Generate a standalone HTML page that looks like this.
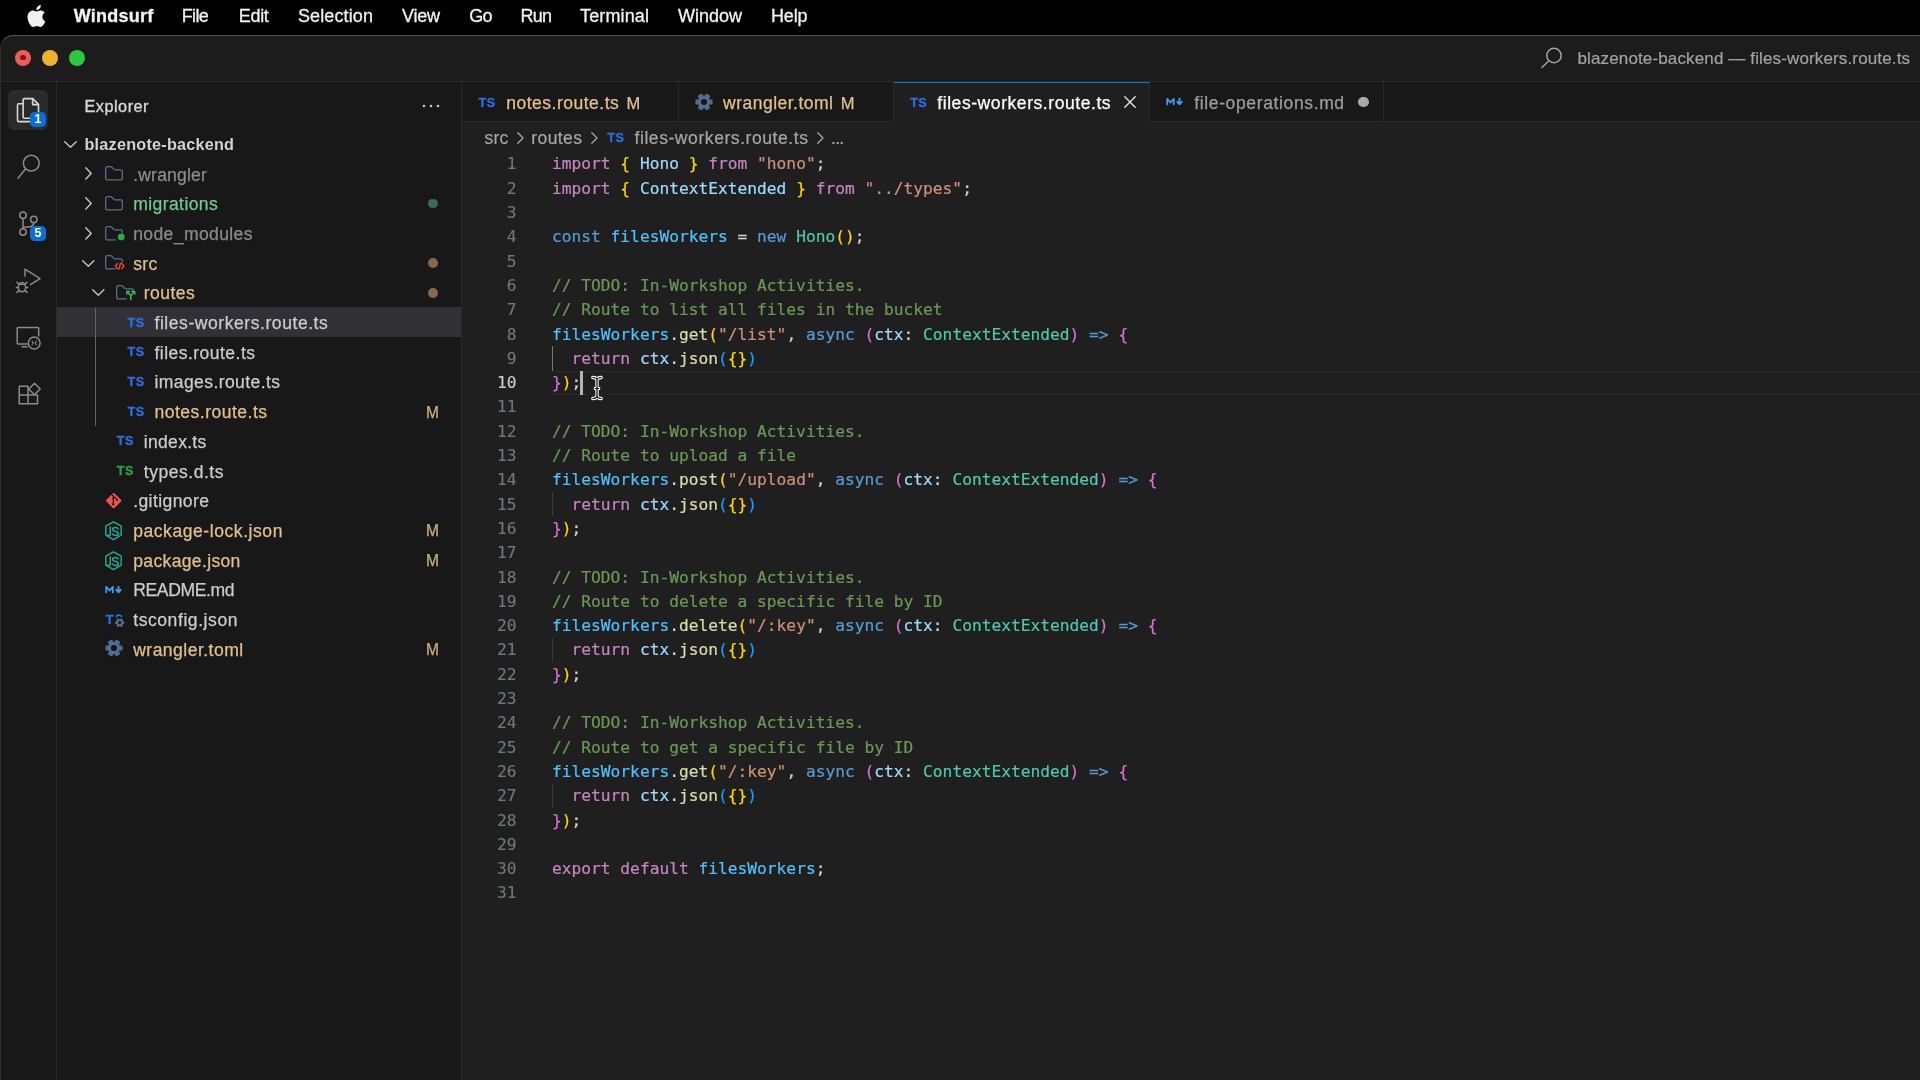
<!DOCTYPE html>
<html lang="en">
<head>
<meta charset="utf-8">
<title>files-workers.route.ts — blazenote-backend — Windsurf</title>
<style>
*{box-sizing:border-box;margin:0;padding:0}
html,body{width:1920px;height:1080px;overflow:hidden;background:#000}
body{position:relative;font-family:"Liberation Sans",sans-serif;color:#ccc}
svg{position:absolute;overflow:visible}
/* ---------- mac menu bar ---------- */
#menubar{position:absolute;left:0;top:0;width:1920px;height:35px;background:#000;will-change:transform}
#menubar span{position:absolute;top:0.1px;-webkit-text-stroke:0.3px;height:33px;line-height:33px;font-size:18px;white-space:nowrap;color:#f2f2f2}
#menubar .app{font-weight:bold}
/* ---------- window ---------- */
#win{position:absolute;left:0;top:35px;width:1940px;height:1060px;background:#181818;border-top-left-radius:13px;overflow:hidden;will-change:transform}
#winborder{position:absolute;left:0;top:0;width:1940px;height:1060px;border-top-left-radius:13px;border-top:1.4px solid #565656;border-left:1px solid #2e2e2e;pointer-events:none;z-index:50}
#titlebar{position:absolute;left:0;top:0;width:1920px;height:46.5px;background:#1c1c1c;border-bottom:1px solid #292929}
.tl{position:absolute;top:14.5px;width:16.4px;height:16.4px;border-radius:50%}
#title-text{position:absolute;left:1577.5px;top:0;height:46px;line-height:46px;font-size:17px;color:#a2a2a2;white-space:nowrap}
/* ---------- activity bar ---------- */
#activity{position:absolute;left:0;top:47px;width:57px;height:1000px;background:#181818;border-right:1px solid #292929}
#act-active{position:absolute;left:8.3px;top:8px;width:40px;height:40.3px;border-radius:6px;background:#2a2a2a}
.badge{position:absolute;width:16px;height:15px;border-radius:4.5px;background:#0a6fd8;color:#fff;font-weight:bold;font-size:12.5px;line-height:15px;text-align:center}
/* ---------- sidebar ---------- */
#sidebar{position:absolute;left:57px;top:47px;width:405px;height:1000px;background:#181818;border-right:1px solid #292929}
#sb-title{position:absolute;left:27.5px;top:10px;height:28px;line-height:28px;font-size:16.2px;color:#d4d4d4;white-space:nowrap}
#sb-root{position:absolute;left:27.5px;top:47.4px;height:29.7px;line-height:29.7px;font-size:16.2px;font-weight:bold;color:#d4d4d4;white-space:nowrap}
.row{position:absolute;left:0;width:404px;height:29.7px}
.row.sel{background:#303036}
.row .lbl{position:absolute;top:1.7px;-webkit-text-stroke:0.25px;height:29.7px;line-height:29.4px;font-size:17.55px;white-space:nowrap;color:#cccccc}
.row .dec{position:absolute;left:365px;width:21px;top:1px;height:29.7px;line-height:29.4px;font-size:15.6px;-webkit-text-stroke:0.25px;text-align:center;color:#cdae80}
.row .dot{position:absolute;left:370.8px;top:10.1px;width:9.8px;height:9.8px;border-radius:50%}
.c-mod{color:#e2c08d !important}
.c-add{color:#73c991 !important}
.c-ign{color:#8c8c8c !important}
.tsico{position:absolute;-webkit-text-stroke:0.3px;font-weight:bold;font-size:12.6px;line-height:14px;height:14px;letter-spacing:0.4px;color:#2f6fe4;white-space:nowrap}
/* ---------- editor ---------- */
#editor{position:absolute;left:462px;top:47px;width:1460px;height:1000px;background:#1f1f1f}
#tabs{position:absolute;left:0;top:0;width:1460px;height:40px;background:#181818;border-bottom:1px solid #292929}
.tab{position:absolute;top:0;height:39px;border-right:1px solid #292929}
.tab.active{background:#1f1f1f;height:40px;border-top:1.5px solid #0078d4}
.tab .tt{position:absolute;top:1px;-webkit-text-stroke:0.25px;height:39px;line-height:40.5px;font-size:17.55px;white-space:nowrap}
#crumbs{position:absolute;left:0;top:40px;width:1460px;height:30px}
#crumbs .bc{position:absolute;top:1px;-webkit-text-stroke:0.2px;height:30px;line-height:31px;font-size:17.55px;color:#a6a6a6;white-space:nowrap}
/* ---------- code ---------- */
#code{position:absolute;left:0;top:70.75px;width:1460px;height:930px;font-family:"DejaVu Sans Mono","Liberation Mono",monospace;font-size:16.23px}
.ln{position:absolute;margin-top:-0.3px;-webkit-text-stroke:0.15px;left:0;width:54.5px;text-align:right;height:24.3px;line-height:24.3px;color:#6e7681;white-space:pre}
.ln.cur{color:#cccccc}
.cl{position:absolute;margin-top:-0.3px;-webkit-text-stroke:0.2px;left:90px;height:24.3px;line-height:24.3px;white-space:pre;color:#d4d4d4}
.k{color:#c586c0}.b{color:#569cd6}.v{color:#9cdcfe}.c{color:#4fc1ff}.t{color:#4ec9b0}.s{color:#ce9178}
.f{color:#dcdcaa}.m{color:#6a9955}.p1{color:#ffd700}.p2{color:#da70d6}.p3{color:#179fff}
#curline{position:absolute;left:89.3px;width:1380px;top:218.6px;height:23.3px;border-top:1.5px solid #282828;border-bottom:1.5px solid #282828}
.guide{position:absolute;left:89.5px;width:1.3px;background:#393939;height:24.3px}
#caret{position:absolute;left:118.1px;top:218px;width:2.6px;height:24.5px;background:#b4b4b4}
</style>
</head>
<body>
<div id="menubar">
<svg style="left:27.300px;top:5.200px" width="19" height="22" viewBox="0 0 170 200"><path fill="#f2f2f2" d="M150.4 68.2c-1.2.9-21.7 12.5-21.7 38.200 0 29.700 26.100 40.200 26.900 40.500-.1.600-4.100 14.400-13.700 28.300-8.500 12.300-17.400 24.500-31 24.500s-17-7.900-32.700-7.900c-15.300 0-20.700 8.100-33.100 8.100s-21.100-11.300-31-25.300C2.500 158.300-6.700 132.900-6.700 108.700c0-38.700 25.200-59.300 50-59.300 13.200 0 24.200 8.700 32.400 8.700 7.900 0 20.200-9.200 35.200-9.200 5.700 0 26.100.5 39.500 19.300zM103.700 32c6.200-7.400 10.600-17.600 10.600-27.800 0-1.400-.1-2.900-.4-4-10.100.4-22.100 6.700-29.300 15.100-5.700 6.500-11 16.700-11 27.100 0 1.600.3 3.100.4 3.600.6.100 1.700.300 2.700.300 9.100 0 20.500-6.100 27-14.300z" transform="translate(10,0)"/></svg>
  <span id="t1" class="app" style="left:73.8px;letter-spacing:0.239px">Windsurf</span>
  <span id="t2" style="left:181.8px;letter-spacing:-0.672px">File</span>
  <span id="t3" style="left:238.8px;letter-spacing:-0.344px">Edit</span>
  <span id="t4" style="left:298px;letter-spacing:0.117px">Selection</span>
  <span id="t5" style="left:402px;letter-spacing:-0.234px">View</span>
  <span id="t6" style="left:469.2px;letter-spacing:-0.700px">Go</span>
  <span id="t7" style="left:520.5px;letter-spacing:-0.700px">Run</span>
  <span id="t8" style="left:580px;letter-spacing:0.138px">Terminal</span>
  <span id="t9" style="left:678px;letter-spacing:-0.006px">Window</span>
  <span id="t10" style="left:771px;letter-spacing:-0.177px">Help</span>
</div>
<div id="win">
<div id="titlebar">
<div class="tl" style="left:14.8px;background:#f05b57"></div><div style="position:absolute;left:20.2px;top:19.9px;width:5.6px;height:5.6px;border-radius:50%;background:#7c1a17"></div>
<div class="tl" style="left:41.8px;background:#ecb22f"></div>
<div class="tl" style="left:69px;background:#2dc840"></div>
<svg style="left:1540.200px;top:10.600px" width="24" height="24" viewBox="0 0 24 24" fill="none" stroke="#a2a2a2" stroke-width="1.5" stroke-linecap="round"><circle cx="14" cy="9.5" r="7.2"/><path d="M8.800 14.700L2 21.500"/></svg>
<div id="t11" style="position:absolute;left:1577.5px;top:1px;height:46px;line-height:46px;font-size:17px;color:#a2a2a2;-webkit-text-stroke:0.2px;white-space:nowrap;;letter-spacing:0.136px">blazenote-backend — files-workers.route.ts</div>
</div>
<div id="activity">
<div id="act-active"></div>
<svg style="left:0;top:0" width="57" height="340" viewBox="0 82 57 340" fill="none" stroke-linejoin="round" stroke-linecap="round">
<g stroke="#d7d7d7" stroke-width="1.6"><path d="M24.500 98.600h8.200l5.800 5.800v12.400a1.400 1.400 0 0 1-1.400 1.400H24.500a1.400 1.400 0 0 1-1.400-1.400V100a1.400 1.400 0 0 1 1.400-1.400z"/><path d="M32.600 98.800v5.800h5.800"/><path d="M22.800 103.800h-3.900a1.400 1.400 0 0 0-1.400 1.400v15a1.400 1.400 0 0 0 1.400 1.400h11.400a1.400 1.400 0 0 0 1.400-1.400v-1.800"/></g>
<g stroke="#8b8b8b" stroke-width="1.5"><circle cx="31.300" cy="163.200" r="7.900"/><path d="M25.500 169L18 178.200"/></g>
<g stroke="#8b8b8b" stroke-width="1.5"><circle cx="23" cy="215.300" r="3.200"/><circle cx="33.800" cy="219.500" r="3.200"/><circle cx="23" cy="232" r="3.200"/><path d="M23 218.600v10.100M33.800 222.800c0 3.400-3 4.200-6 4.200h-4.800"/></g>
<g stroke="#8b8b8b" stroke-width="1.5"><path d="M25 276V269.200L40 278.700L30.500 284.600"/><ellipse cx="22" cy="287.200" rx="3.600" ry="4.600"/><path d="M19.200 284.300h5.600M16.300 287.400h2M25.700 287.400h2M17 282.200l1.800 1.700M27 282.200l-1.800 1.700M17 292.400l1.900-1.800M27 292.400l-1.900-1.800"/></g>
<g stroke="#8b8b8b" stroke-width="1.500"><path d="M27 343.900H18a.8.800 0 0 1-.8-.8V328.300a.8.800 0 0 1 .8-.8H37.900a.8.800 0 0 1 .8.800V336"/><path d="M22 346.700h5"/><circle cx="34.200" cy="343" r="5.900"/></g><g stroke="#8b8b8b" stroke-width="1.100"><path d="M32 341.200l1.300 1.800-1.300 1.800M36.400 341.200l-1.300 1.800 1.300 1.800"/></g>
<g stroke="#8b8b8b" stroke-width="1.500"><path d="M19.200 386.300h8.800v8.700h-8.800zM19.200 395h8.800v8.700h-8.800zM28 395h9.500v8.700H28z"/><path d="M34.500 383.200l5.700 5.800-5.700 5.800-5.700-5.800z"/></g>
</svg>
<div class="badge" style="left:30px;top:30.4px">1</div>
<div class="badge" style="left:30px;top:143.600px">5</div>
</div>
<div id="sidebar">
<div id="t12" style="position:absolute;left:27.5px;top:9.500px;height:28px;line-height:28px;font-size:16.2px;color:#d8d8d8;-webkit-text-stroke:0.35px;white-space:nowrap;;letter-spacing:0.531px">Explorer</div>
<svg style="left:364px;top:20.500px" width="20" height="6" viewBox="0 0 20 6"><circle cx="3" cy="3" r="1.350" fill="#c5c5c5"/><circle cx="10" cy="3" r="1.350" fill="#c5c5c5"/><circle cx="17" cy="3" r="1.350" fill="#c5c5c5"/></svg>
<svg style="left:6.700px;top:59.300px" width="13" height="7" viewBox="0 0 13 7" fill="none" stroke="#c5c5c5" stroke-width="1.400" stroke-linecap="round" stroke-linejoin="round"><path d="M.7.700l5.800 5.600L12.300.7"/></svg>
<div id="t13" style="position:absolute;left:27.500px;top:48.400px;height:29.7px;line-height:29.7px;font-size:16.2px;font-weight:bold;color:#d2d2d2;white-space:nowrap;;letter-spacing:0.235px">blazenote-backend</div>
<div class="row" style="top:76.9px"><svg style="left:27.9px;top:8.3px" width="7" height="13" viewBox="0 0 7 13" fill="none" stroke="#c5c5c5" stroke-width="1.400" stroke-linecap="round" stroke-linejoin="round"><path d="M.8.800l5.400 5.600L.8 12"/></svg><svg style="left:47.7px;top:7.4px" width="18" height="14.600" viewBox="0 0 18 14.600" fill="none" stroke="#54718f" stroke-width="1.300" stroke-linecap="round" stroke-linejoin="round"><path d="M2.200 .7H5.600c.5 0 .9.200 1.200.5l2 2.200c.3.300.7.500 1.200.5h5.800c.8 0 1.500.7 1.500 1.500v7c0 .8-.7 1.500-1.500 1.500H2.200c-.8 0-1.500-.7-1.500-1.500V2.200c0-.8.7-1.500 1.500-1.500z"/></svg><span id="t14" class="lbl c-ign" style="left:76.2px;letter-spacing:0.199px">.wrangler</span></div>
<div class="row" style="top:106.6px"><svg style="left:27.9px;top:8.3px" width="7" height="13" viewBox="0 0 7 13" fill="none" stroke="#c5c5c5" stroke-width="1.400" stroke-linecap="round" stroke-linejoin="round"><path d="M.8.800l5.400 5.600L.8 12"/></svg><svg style="left:47.7px;top:7.4px" width="18" height="14.600" viewBox="0 0 18 14.600" fill="none" stroke="#54718f" stroke-width="1.300" stroke-linecap="round" stroke-linejoin="round"><path d="M2.200 .7H5.600c.5 0 .9.200 1.200.5l2 2.200c.3.300.7.500 1.200.5h5.800c.8 0 1.500.7 1.500 1.500v7c0 .8-.7 1.500-1.500 1.500H2.200c-.8 0-1.500-.7-1.500-1.500V2.200c0-.8.7-1.500 1.500-1.500z"/></svg><span id="t15" class="lbl c-add" style="left:76.2px;letter-spacing:0.414px">migrations</span><span class="dot" style="background:#3c6a54"></span></div>
<div class="row" style="top:136.3px"><svg style="left:27.9px;top:8.3px" width="7" height="13" viewBox="0 0 7 13" fill="none" stroke="#c5c5c5" stroke-width="1.400" stroke-linecap="round" stroke-linejoin="round"><path d="M.8.800l5.400 5.600L.8 12"/></svg><svg style="left:47.7px;top:7.4px" width="18" height="14.600" viewBox="0 0 18 14.600" fill="none" stroke="#54718f" stroke-width="1.300" stroke-linecap="round" stroke-linejoin="round"><path d="M10.300 13.900H2.200c-.8 0-1.500-.7-1.500-1.500V2.200c0-.8.7-1.500 1.500-1.500H5.600c.5 0 .9.200 1.200.5l2 2.200c.3.300.7.500 1.200.5h5.800c.8 0 1.500.7 1.500 1.500v1.300"/><circle cx="16.250" cy="10.900" r="3.400" fill="#2aac47" stroke="none"/></svg><span id="t16" class="lbl c-ign" style="left:76.2px;letter-spacing:0.389px">node_modules</span></div>
<div class="row" style="top:166.0px"><svg style="left:25.0px;top:11.6px" width="13" height="7" viewBox="0 0 13 7" fill="none" stroke="#c5c5c5" stroke-width="1.400" stroke-linecap="round" stroke-linejoin="round"><path d="M.7.700l5.600 5.600L11.900.7"/></svg><svg style="left:47.7px;top:7.4px" width="18" height="14.600" viewBox="0 0 18 14.600" fill="none" stroke="#54718f" stroke-width="1.300" stroke-linecap="round" stroke-linejoin="round"><path d="M10.300 13.900H2.200c-.8 0-1.500-.7-1.500-1.500V2.200c0-.8.7-1.500 1.500-1.500H5.600c.5 0 .9.200 1.200.5l2 2.200c.3.300.7.500 1.200.5h5.800c.8 0 1.500.7 1.500 1.500v1.300"/><g stroke="#e5432f" stroke-width="1.500"><path d="M12.600 8.600l-2.200 2.500 2.200 2.500M16.800 8.600l2.200 2.500-2.200 2.500M15.500 8.200l-1.600 5.800"/></g></svg><span id="t17" class="lbl c-mod" style="left:76.2px;letter-spacing:0.412px">src</span><span class="dot" style="background:#84694f"></span></div>
<div class="row" style="top:195.7px"><svg style="left:35.3px;top:11.6px" width="13" height="7" viewBox="0 0 13 7" fill="none" stroke="#c5c5c5" stroke-width="1.400" stroke-linecap="round" stroke-linejoin="round"><path d="M.7.700l5.600 5.600L11.900.7"/></svg><svg style="left:58.5px;top:7.4px" width="18" height="14.600" viewBox="0 0 18 14.600" fill="none" stroke="#54718f" stroke-width="1.300" stroke-linecap="round" stroke-linejoin="round"><path d="M10.300 13.900H2.200c-.8 0-1.500-.7-1.500-1.500V2.200c0-.8.7-1.500 1.500-1.500H5.600c.5 0 .9.200 1.200.5l2 2.200c.3.300.7.500 1.200.5h5.800c.8 0 1.500.7 1.500 1.500v1.300"/><g stroke="#2fc24a" stroke-width="1.500"><path d="M14.800 14.800v-4.300M14.800 10.500l-3.400-3.500M14.800 10.500l3.400-3.500"/><path d="M10.800 9.300V6.500h2.800M16 6.500h2.800v2.800" stroke-width="1.300"/></g></svg><span id="t18" class="lbl c-mod" style="left:86.8px;letter-spacing:0.433px">routes</span><span class="dot" style="background:#84694f"></span></div>
<div class="row sel" style="top:225.4px"><span class="tsico" style="left:70.6px;top:8.2px;color:#2f6fe4">TS</span><span id="t19" class="lbl" style="left:97.5px;letter-spacing:0.551px">files-workers.route.ts</span></div>
<div class="row" style="top:255.1px"><span class="tsico" style="left:70.6px;top:8.2px;color:#2f6fe4">TS</span><span id="t20" class="lbl" style="left:97.5px;letter-spacing:0.460px">files.route.ts</span></div>
<div class="row" style="top:284.8px"><span class="tsico" style="left:70.6px;top:8.2px;color:#2f6fe4">TS</span><span id="t21" class="lbl" style="left:97.5px;letter-spacing:0.403px">images.route.ts</span></div>
<div class="row" style="top:314.5px"><span class="tsico" style="left:70.6px;top:8.2px;color:#2f6fe4">TS</span><span id="t22" class="lbl c-mod" style="left:97.5px;letter-spacing:0.490px">notes.route.ts</span><span class="dec">M</span></div>
<div class="row" style="top:344.2px"><span class="tsico" style="left:59.8px;top:8.2px;color:#2f6fe4">TS</span><span id="t23" class="lbl" style="left:86.8px;letter-spacing:0.297px">index.ts</span></div>
<div class="row" style="top:373.9px"><span class="tsico" style="left:59.8px;top:8.2px;color:#2ea043">TS</span><span id="t24" class="lbl" style="left:86.8px;letter-spacing:0.519px">types.d.ts</span></div>
<div class="row" style="top:403.6px"><svg style="left:48.1px;top:6.5px" width="17.400" height="17.400" viewBox="0 0 17.400 17.400"><rect x="2.900" y="2.900" width="11.600" height="11.600" rx="1.300" transform="rotate(45 8.700 8.700)" fill="#ea5350"/><g stroke="#1a1212" stroke-width="1.150" fill="none" stroke-linecap="round"><path d="M8.300 3.800v8.600M6.600 2.300l5.400 5.400"/></g><circle cx="8.300" cy="12.300" r="1.150" fill="#1a1212"/><circle cx="8.300" cy="5.900" r="1" fill="#1a1212"/><circle cx="11.900" cy="7.700" r="1" fill="#1a1212"/></svg><span id="t25" class="lbl" style="left:76.2px;letter-spacing:0.408px">.gitignore</span></div>
<div class="row" style="top:433.3px"><svg style="left:48.3px;top:5.8px" width="17" height="19.400" viewBox="0 0 17 19.400" fill="none" stroke="#2aa996" stroke-linejoin="round" stroke-linecap="round"><path d="M8.500 .8l7.700 4.400v9l-7.700 4.400-7.700-4.400v-9z" stroke-width="1.400"/><path d="M5.300 6.100v6.600c0 1.600-1.300 2.300-2.900 1.500" stroke-width="1.500"/><path d="M13.200 7.900c-.6-1-1.600-1.500-2.800-1.500-1.600 0-2.800.8-2.800 2.100 0 2.600 5.800 1.200 5.800 3.900 0 1.300-1.200 2.100-2.900 2.100-1.400 0-2.500-.6-3.100-1.700" stroke-width="1.500"/></svg><span id="t26" class="lbl c-mod" style="left:76.2px;letter-spacing:0.554px">package-lock.json</span><span class="dec">M</span></div>
<div class="row" style="top:463.0px"><svg style="left:48.3px;top:5.8px" width="17" height="19.400" viewBox="0 0 17 19.400" fill="none" stroke="#2aa996" stroke-linejoin="round" stroke-linecap="round"><path d="M8.500 .8l7.700 4.400v9l-7.700 4.400-7.700-4.400v-9z" stroke-width="1.400"/><path d="M5.300 6.100v6.600c0 1.600-1.300 2.300-2.900 1.500" stroke-width="1.500"/><path d="M13.200 7.900c-.6-1-1.600-1.500-2.800-1.500-1.600 0-2.800.8-2.800 2.100 0 2.600 5.800 1.200 5.800 3.900 0 1.300-1.200 2.100-2.900 2.100-1.400 0-2.500-.6-3.100-1.700" stroke-width="1.500"/></svg><span id="t27" class="lbl c-mod" style="left:76.2px;letter-spacing:0.352px">package.json</span><span class="dec">M</span></div>
<div class="row" style="top:492.7px"><svg style="left:48.0px;top:9.6px" width="18" height="10" viewBox="0 0 18 10" fill="none" stroke="#4497f2" stroke-width="1.900" stroke-linecap="round" stroke-linejoin="round"><path d="M1.200 8.200V2.900l3.300 3.500 3.300-3.500v5.300"/><path d="M13.500 2.600v5.200M11.300 5.800l2.200 2.500 2.200-2.500"/></svg><span id="t28" class="lbl" style="left:76.2px;letter-spacing:-0.367px">README.md</span></div>
<div class="row" style="top:522.4px"><span class="tsico" style="left:48.8px;top:9.1px;font-size:12.800px">T</span><svg style="left:57.5px;top:9.3px" width="8" height="6" viewBox="0 0 8 6" fill="none" stroke="#2f6fe4" stroke-width="1.700" stroke-linecap="round"><path d="M6.400 2.300C5.500.6 1.500.7 1.500 2.700"/></svg><svg style="left:58.0px;top:13.9px" width="9.4" height="9.4" viewBox="-10 -10 20 20"><g fill="#4f6e90"><rect x="-2.900" y="-9.500" width="5.800" height="5.500" rx="1.400" transform="rotate(30)"/><rect x="-2.900" y="-9.500" width="5.800" height="5.500" rx="1.400" transform="rotate(90)"/><rect x="-2.900" y="-9.500" width="5.800" height="5.500" rx="1.400" transform="rotate(150)"/><rect x="-2.900" y="-9.500" width="5.800" height="5.500" rx="1.400" transform="rotate(210)"/><rect x="-2.900" y="-9.500" width="5.800" height="5.500" rx="1.400" transform="rotate(270)"/><rect x="-2.900" y="-9.500" width="5.800" height="5.500" rx="1.400" transform="rotate(330)"/></g><circle r="5.150" fill="none" stroke="#4f6e90" stroke-width="3.500"/></svg><span id="t29" class="lbl" style="left:76.2px;letter-spacing:0.571px">tsconfig.json</span></div>
<div class="row" style="top:552.1px"><svg style="left:47.8px;top:5.3px" width="18" height="18" viewBox="-10 -10 20 20"><g fill="#4f6e90"><rect x="-2.900" y="-9.500" width="5.800" height="5.500" rx="1.400" transform="rotate(30)"/><rect x="-2.900" y="-9.500" width="5.800" height="5.500" rx="1.400" transform="rotate(90)"/><rect x="-2.900" y="-9.500" width="5.800" height="5.500" rx="1.400" transform="rotate(150)"/><rect x="-2.900" y="-9.500" width="5.800" height="5.500" rx="1.400" transform="rotate(210)"/><rect x="-2.900" y="-9.500" width="5.800" height="5.500" rx="1.400" transform="rotate(270)"/><rect x="-2.900" y="-9.500" width="5.800" height="5.500" rx="1.400" transform="rotate(330)"/></g><circle r="5.150" fill="none" stroke="#4f6e90" stroke-width="3.500"/></svg><span id="t30" class="lbl c-mod" style="left:76.2px;letter-spacing:0.478px">wrangler.toml</span><span class="dec">M</span></div>
<div style="position:absolute;left:37.8px;top:225.5px;width:1.400px;height:118.400px;background:#646464"></div>
</div>
<div id="editor">
<div id="tabs">
<div class="tab" style="left:0.0px;width:216.5px"><span class="tsico" style="left:16.6px;top:14.3px;color:#2f6fe4">TS</span><span id="t31" class="tt" style="left:44.3px;color:#e2c08d;letter-spacing:0.482px">notes.route.ts</span><span class="tt" style="left:164.5px;color:#e2c08d;font-size:16.500px">M</span></div>
<div class="tab" style="left:216.5px;width:215.0px"><svg style="left:16.0px;top:11.0px" width="18" height="18" viewBox="-10 -10 20 20"><g fill="#4f6e90"><rect x="-2.900" y="-9.500" width="5.800" height="5.500" rx="1.400" transform="rotate(30)"/><rect x="-2.900" y="-9.500" width="5.800" height="5.500" rx="1.400" transform="rotate(90)"/><rect x="-2.900" y="-9.500" width="5.800" height="5.500" rx="1.400" transform="rotate(150)"/><rect x="-2.900" y="-9.500" width="5.800" height="5.500" rx="1.400" transform="rotate(210)"/><rect x="-2.900" y="-9.500" width="5.800" height="5.500" rx="1.400" transform="rotate(270)"/><rect x="-2.900" y="-9.500" width="5.800" height="5.500" rx="1.400" transform="rotate(330)"/></g><circle r="5.150" fill="none" stroke="#4f6e90" stroke-width="3.500"/></svg><span id="t32" class="tt" style="left:44.5px;color:#e2c08d;letter-spacing:0.478px">wrangler.toml</span><span class="tt" style="left:162.3px;color:#e2c08d;font-size:16.500px">M</span></div>
<div class="tab active" style="left:431.5px;width:256.0px"><span class="tsico" style="left:16.7px;top:12.8px;color:#2f6fe4">TS</span><span id="t33" class="tt" style="left:43.8px;color:#ffffff;top:-0.500px;letter-spacing:0.551px">files-workers.route.ts</span><svg style="left:230.8px;top:12.800px" width="12" height="12" viewBox="0 0 12 12" stroke="#e6e6e6" stroke-width="1.350" stroke-linecap="round"><path d="M.8.800l10.400 10.400M11.200.8L.8 11.200"/></svg></div>
<div class="tab" style="left:687.5px;width:234.0px"><svg style="left:16.5px;top:14.3px" width="18" height="10" viewBox="0 0 18 10" fill="none" stroke="#4497f2" stroke-width="1.900" stroke-linecap="round" stroke-linejoin="round"><path d="M1.200 8.200V2.900l3.300 3.500 3.300-3.500v5.300"/><path d="M13.500 2.600v5.200M11.300 5.800l2.200 2.500 2.200-2.500"/></svg><span id="t34" class="tt" style="left:44.8px;color:#9d9d9d;letter-spacing:0.615px">file-operations.md</span><span style="position:absolute;left:208.8px;top:14.800px;width:10.600px;height:10.600px;border-radius:50%;background:#a9a9a9"></span></div>
</div>
<div id="crumbs">
<span id="t35" class="bc" style="left:22.5px;letter-spacing:0.213px">src</span><svg style="left:55.1px;top:9.600px" width="7" height="12" viewBox="0 0 7 12" fill="none" stroke="#a6a6a6" stroke-width="1.300" stroke-linecap="round" stroke-linejoin="round"><path d="M.8.800l5.200 5.200L.8 11.200"/></svg><span id="t36" class="bc" style="left:69.3px;letter-spacing:0.393px">routes</span><svg style="left:128.6px;top:9.600px" width="7" height="12" viewBox="0 0 7 12" fill="none" stroke="#a6a6a6" stroke-width="1.300" stroke-linecap="round" stroke-linejoin="round"><path d="M.8.800l5.200 5.200L.8 11.200"/></svg><span class="tsico" style="left:145.3px;top:9.2px;color:#2f6de0">TS</span><span id="t37" class="bc" style="left:172.5px;letter-spacing:0.560px">files-workers.route.ts</span><svg style="left:354.6px;top:9.600px" width="7" height="12" viewBox="0 0 7 12" fill="none" stroke="#a6a6a6" stroke-width="1.300" stroke-linecap="round" stroke-linejoin="round"><path d="M.8.800l5.200 5.200L.8 11.200"/></svg><span id="t38" class="bc" style="left:369.0px;letter-spacing:-0.700px">...</span>
</div>
<div id="code">
<div id="curline"></div>
<div class="ln" style="top:0.0px">1</div><div class="cl" style="top:0.0px"><span class="k">import</span> <span class="p1">{</span> <span class="v">Hono</span> <span class="p1">}</span> <span class="k">from</span> <span class="s">&quot;hono&quot;</span>;</div>
<div class="ln" style="top:24.3px">2</div><div class="cl" style="top:24.3px"><span class="k">import</span> <span class="p1">{</span> <span class="v">ContextExtended</span> <span class="p1">}</span> <span class="k">from</span> <span class="s">&quot;../types&quot;</span>;</div>
<div class="ln" style="top:48.6px">3</div>
<div class="ln" style="top:72.9px">4</div><div class="cl" style="top:72.9px"><span class="b">const</span> <span class="c">filesWorkers</span> = <span class="b">new</span> <span class="t">Hono</span><span class="p1">()</span>;</div>
<div class="ln" style="top:97.2px">5</div>
<div class="ln" style="top:121.5px">6</div><div class="cl" style="top:121.5px"><span class="m">// TODO: In-Workshop Activities.</span></div>
<div class="ln" style="top:145.8px">7</div><div class="cl" style="top:145.8px"><span class="m">// Route to list all files in the bucket</span></div>
<div class="ln" style="top:170.1px">8</div><div class="cl" style="top:170.1px"><span class="c">filesWorkers</span>.<span class="f">get</span><span class="p1">(</span><span class="s">&quot;/list&quot;</span>, <span class="b">async</span> <span class="p2">(</span><span class="v">ctx</span>: <span class="t">ContextExtended</span><span class="p2">)</span> <span class="b">=&gt;</span> <span class="p2">{</span></div>
<div class="ln" style="top:194.4px">9</div><div class="cl" style="top:194.4px">  <span class="k">return</span> <span class="v">ctx</span>.<span class="f">json</span><span class="p3">(</span><span class="p1">{}</span><span class="p3">)</span></div>
<div class="ln cur" style="top:218.7px">10</div><div class="cl" style="top:218.7px"><span class="p2">}</span><span class="p1">)</span>;</div>
<div class="ln" style="top:243.0px">11</div>
<div class="ln" style="top:267.3px">12</div><div class="cl" style="top:267.3px"><span class="m">// TODO: In-Workshop Activities.</span></div>
<div class="ln" style="top:291.6px">13</div><div class="cl" style="top:291.6px"><span class="m">// Route to upload a file</span></div>
<div class="ln" style="top:315.9px">14</div><div class="cl" style="top:315.9px"><span class="c">filesWorkers</span>.<span class="f">post</span><span class="p1">(</span><span class="s">&quot;/upload&quot;</span>, <span class="b">async</span> <span class="p2">(</span><span class="v">ctx</span>: <span class="t">ContextExtended</span><span class="p2">)</span> <span class="b">=&gt;</span> <span class="p2">{</span></div>
<div class="ln" style="top:340.2px">15</div><div class="cl" style="top:340.2px">  <span class="k">return</span> <span class="v">ctx</span>.<span class="f">json</span><span class="p3">(</span><span class="p1">{}</span><span class="p3">)</span></div>
<div class="ln" style="top:364.5px">16</div><div class="cl" style="top:364.5px"><span class="p2">}</span><span class="p1">)</span>;</div>
<div class="ln" style="top:388.8px">17</div>
<div class="ln" style="top:413.1px">18</div><div class="cl" style="top:413.1px"><span class="m">// TODO: In-Workshop Activities.</span></div>
<div class="ln" style="top:437.4px">19</div><div class="cl" style="top:437.4px"><span class="m">// Route to delete a specific file by ID</span></div>
<div class="ln" style="top:461.7px">20</div><div class="cl" style="top:461.7px"><span class="c">filesWorkers</span>.<span class="f">delete</span><span class="p1">(</span><span class="s">&quot;/:key&quot;</span>, <span class="b">async</span> <span class="p2">(</span><span class="v">ctx</span>: <span class="t">ContextExtended</span><span class="p2">)</span> <span class="b">=&gt;</span> <span class="p2">{</span></div>
<div class="ln" style="top:486.0px">21</div><div class="cl" style="top:486.0px">  <span class="k">return</span> <span class="v">ctx</span>.<span class="f">json</span><span class="p3">(</span><span class="p1">{}</span><span class="p3">)</span></div>
<div class="ln" style="top:510.3px">22</div><div class="cl" style="top:510.3px"><span class="p2">}</span><span class="p1">)</span>;</div>
<div class="ln" style="top:534.6px">23</div>
<div class="ln" style="top:558.9px">24</div><div class="cl" style="top:558.9px"><span class="m">// TODO: In-Workshop Activities.</span></div>
<div class="ln" style="top:583.2px">25</div><div class="cl" style="top:583.2px"><span class="m">// Route to get a specific file by ID</span></div>
<div class="ln" style="top:607.5px">26</div><div class="cl" style="top:607.5px"><span class="c">filesWorkers</span>.<span class="f">get</span><span class="p1">(</span><span class="s">&quot;/:key&quot;</span>, <span class="b">async</span> <span class="p2">(</span><span class="v">ctx</span>: <span class="t">ContextExtended</span><span class="p2">)</span> <span class="b">=&gt;</span> <span class="p2">{</span></div>
<div class="ln" style="top:631.8px">27</div><div class="cl" style="top:631.8px">  <span class="k">return</span> <span class="v">ctx</span>.<span class="f">json</span><span class="p3">(</span><span class="p1">{}</span><span class="p3">)</span></div>
<div class="ln" style="top:656.1px">28</div><div class="cl" style="top:656.1px"><span class="p2">}</span><span class="p1">)</span>;</div>
<div class="ln" style="top:680.4px">29</div>
<div class="ln" style="top:704.7px">30</div><div class="cl" style="top:704.7px"><span class="k">export</span> <span class="k">default</span> <span class="c">filesWorkers</span>;</div>
<div class="ln" style="top:729.0px">31</div>
<div class="guide" style="top:193.7px;background:#777"></div><div class="guide" style="top:339.4px"></div><div class="guide" style="top:485.2px"></div><div class="guide" style="top:631.1px"></div>
<div id="caret"></div>
<svg style="left:128.9px;top:223.2px" width="12" height="24" viewBox="0 0 12 24" fill="none" stroke-linecap="round" stroke-linejoin="round"><path d="M1.800 1.500c2.400 0 4.200 1 4.200 3 0-2 1.800-3 4.200-3M1.800 22.500c2.400 0 4.200-1 4.200-3 0 2 1.800 3 4.200 3M6 4.500v15M4.300 12.500h3.400" stroke="#f4f4f4" stroke-width="3.400"/><path d="M1.800 1.500c2.400 0 4.200 1 4.200 3 0-2 1.800-3 4.200-3M1.800 22.500c2.400 0 4.200-1 4.200-3 0 2 1.800 3 4.200 3M6 4.500v15M4.300 12.500h3.400" stroke="#111" stroke-width="1.200"/></svg>
</div>
</div>
<div id="winborder"></div>
</div>
</body>
</html>
